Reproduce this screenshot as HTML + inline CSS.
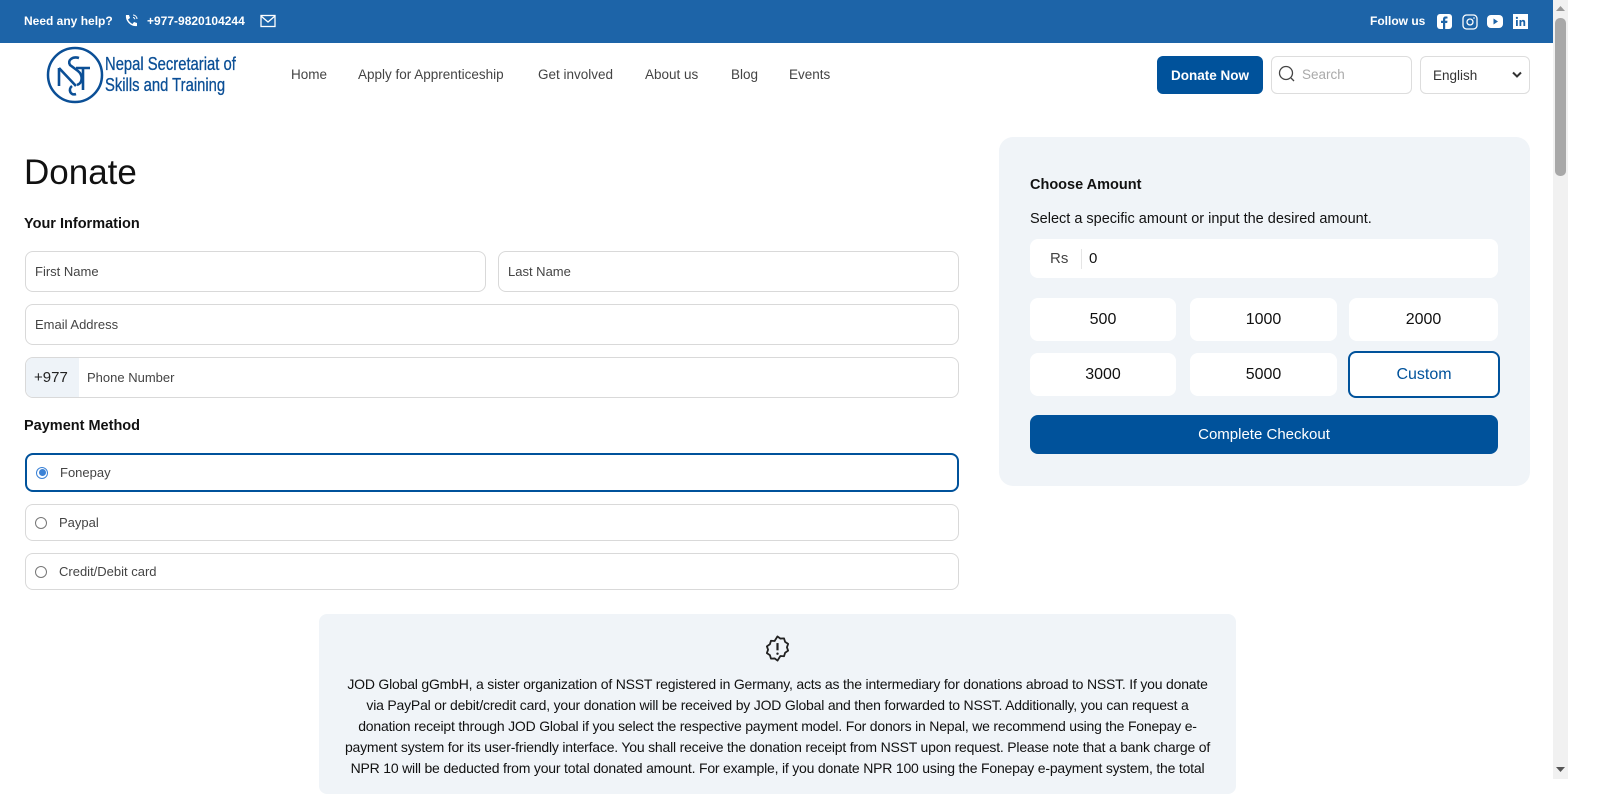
<!DOCTYPE html>
<html><head><meta charset="utf-8"><style>
*{box-sizing:border-box;margin:0;padding:0}
body{width:1600px;height:779px;overflow:hidden;background:#fff;font-family:"Liberation Sans",Arial,sans-serif;position:relative;color:#111}
.abs{position:absolute}
.top{left:0;top:0;width:1553px;height:43px;background:#1d64a8;color:#fff;font-size:12px;font-weight:bold}
.nav a{position:absolute;top:67px;font-size:13.5px;color:#444;text-decoration:none}
.inp{position:absolute;border:1px solid #d9d9d9;border-radius:8px;background:#fff;font-size:13px;color:#444;padding-left:9px;display:flex;align-items:center}
.radio{width:12px;height:12px;border:1px solid #777;border-radius:50%;margin-right:12px;margin-left:0}
.amt{position:absolute;background:#fff;border-radius:8px;width:148px;height:43px;display:flex;align-items:center;justify-content:center;font-size:16px;color:#111}
</style></head><body>
<div class="abs top">
 <span class="abs" style="left:24px;top:14px">Need any help?</span>
 <svg class="abs" style="left:123px;top:13px" width="16" height="16" viewBox="0 0 16 16"><path d="M3 2l3 0 1 3-2 1.5c1 2 2.5 3.5 4.5 4.5L11 9l3 1v3c-6 1-12-5-11-11z" fill="#fff"/><path d="M10 2a4 4 0 0 1 4 4M10 4.5a1.8 1.8 0 0 1 1.8 1.8" stroke="#fff" fill="none" stroke-width="1"/></svg>
 <span class="abs" style="left:147px;top:14px">+977-9820104244</span>
 <svg class="abs" style="left:260px;top:14px" width="16" height="14" viewBox="0 0 16 14"><rect x="1" y="1.5" width="14" height="11" fill="none" stroke="#fff" stroke-width="1.3"/><path d="M1 2l7 6 7-6" fill="none" stroke="#fff" stroke-width="1.3"/></svg>
 <span class="abs" style="left:1370px;top:14px">Follow us</span>
 <svg class="abs" style="left:1437px;top:14px" width="15" height="15" viewBox="0 0 15 15"><rect width="15" height="15" rx="3" fill="#fff"/><path d="M8.2 15V9h2l.3-2.2H8.2V5.5c0-.6.2-1 1-1h1.3V2.6c-.3 0-1-.1-1.8-.1-1.8 0-2.7 1-2.7 2.8v1.5H4V9h2v6z" fill="#1d64a8"/></svg>
 <svg class="abs" style="left:1462px;top:14px" width="16" height="16" viewBox="0 0 16 16"><rect x="1" y="1" width="14" height="14" rx="3.5" fill="none" stroke="#fff" stroke-width="1.3"/><circle cx="8" cy="8" r="3" fill="none" stroke="#fff" stroke-width="1.3"/><circle cx="12" cy="4" r=".8" fill="#fff"/></svg>
 <svg class="abs" style="left:1487px;top:15px" width="16" height="13" viewBox="0 0 16 13"><rect width="16" height="13" rx="4" fill="#fff"/><path d="M6.5 3.5v6l4.5-3z" fill="#1d64a8"/></svg>
 <svg class="abs" style="left:1513px;top:14px" width="15" height="15" viewBox="0 0 15 15"><rect width="15" height="15" fill="#fff"/><rect x="3" y="6" width="1.8" height="6" fill="#1d64a8"/><circle cx="3.9" cy="3.9" r="1.1" fill="#1d64a8"/><path d="M6.5 6h1.7v1c.5-.8 1.2-1.1 2-1.1 1.5 0 2 .9 2 2.5V12h-1.8V8.8c0-.8-.2-1.3-.9-1.3s-1.2.5-1.2 1.3V12H6.5z" fill="#1d64a8"/></svg>
</div>
<svg class="abs" style="left:45px;top:46px" width="60" height="58" viewBox="0 0 60 58"><circle cx="30" cy="29" r="27" fill="none" stroke="#0b4f96" stroke-width="2.5"/><path d="M34 12c-6-2-12 2-9 7l8 6c5 4 5 12-1 14" fill="none" stroke="#0b4f96" stroke-width="2.6"/><path d="M14 22v18M14 22l17 18M31 22h14M38 22v22" fill="none" stroke="#0b4f96" stroke-width="2.6"/><path d="M27 40c-4 3-2 10 4 8" fill="none" stroke="#0b4f96" stroke-width="2.6"/></svg>
<div class="abs" style="left:105px;top:53px;font-size:18.5px;line-height:21px;color:#0b4f96;transform:scaleX(.8);transform-origin:0 0;white-space:nowrap;-webkit-text-stroke:.3px #0b4f96">Nepal Secretariat of<br>Skills and Training</div>
<div class="nav"><a style="left:291px">Home</a><a style="left:358px">Apply for Apprenticeship</a><a style="left:538px">Get involved</a><a style="left:645px">About us</a><a style="left:731px">Blog</a><a style="left:789px">Events</a></div>
<div class="abs" style="left:1157px;top:56px;width:106px;height:38px;background:#00529b;border-radius:6px;color:#fff;font-size:13.5px;font-weight:bold;display:flex;align-items:center;justify-content:center">Donate Now</div>
<div class="abs" style="left:1271px;top:56px;width:141px;height:38px;border:1px solid #ddd;border-radius:6px;font-size:13.5px;color:#aaa;padding:10px 0 0 30px">Search</div>
<svg class="abs" style="left:1278px;top:65px" width="18" height="19" viewBox="0 0 18 19"><circle cx="8" cy="8" r="6.5" fill="none" stroke="#444" stroke-width="1.3"/><path d="M13 13l3 3" stroke="#444" stroke-width="1.3"/></svg>
<div class="abs" style="left:1420px;top:56px;width:110px;height:38px;border:1px solid #ddd;border-radius:6px;font-size:13.5px;color:#333;padding:11px 0 0 12px">English</div>
<svg class="abs" style="left:1512px;top:71px" width="10" height="8" viewBox="0 0 10 8"><path d="M1 1.5l4 4 4-4" fill="none" stroke="#333" stroke-width="2"/></svg>

<div class="abs" style="left:24px;top:153px;font-size:35px;color:#111">Donate</div>
<div class="abs" style="left:24px;top:216px;font-size:14.5px;font-weight:bold">Your Information</div>
<div class="inp" style="left:25px;top:251px;width:461px;height:41px">First Name</div>
<div class="inp" style="left:498px;top:251px;width:461px;height:41px">Last Name</div>
<div class="inp" style="left:25px;top:304px;width:934px;height:41px">Email Address</div>
<div class="inp" style="left:25px;top:357px;width:934px;height:41px;padding-left:0;overflow:hidden"><span style="background:#eef3f8;height:100%;width:53px;display:flex;align-items:center;padding-left:8px;font-size:15px;color:#222">+977</span><span style="padding-left:8px">Phone Number</span></div>
<div class="abs" style="left:24px;top:418px;font-size:14.5px;font-weight:bold">Payment Method</div>
<div class="inp" style="left:25px;top:453px;width:934px;height:39px;border:2px solid #00529b"><span class="radio" style="border-color:#3b82d6;display:flex;align-items:center;justify-content:center"><span style="width:7px;height:7px;border-radius:50%;background:#3b82d6"></span></span><span>Fonepay</span></div>
<div class="inp" style="left:25px;top:504px;width:934px;height:37px"><span class="radio"></span>Paypal</div>
<div class="inp" style="left:25px;top:553px;width:934px;height:37px"><span class="radio"></span>Credit/Debit card</div>

<div class="abs" style="left:999px;top:137px;width:531px;height:349px;background:#f0f4f8;border-radius:14px"></div>
<div class="abs" style="left:1030px;top:177px;font-size:14.5px;font-weight:bold">Choose Amount</div>
<div class="abs" style="left:1030px;top:211px;font-size:14.5px">Select a specific amount or input the desired amount.</div>
<div class="abs" style="left:1030px;top:239px;width:468px;height:39px;background:#fff;border-radius:8px;font-size:15px;display:flex;align-items:center"><span style="padding-left:20px;color:#444;width:52px;border-right:1px solid #e5e5e5;line-height:20px">Rs</span><span style="padding-left:7px">0</span></div>
<div class="amt" style="left:1030px;top:298px;width:146px">500</div>
<div class="amt" style="left:1190px;top:298px;width:147px">1000</div>
<div class="amt" style="left:1349px;top:298px;width:149px">2000</div>
<div class="amt" style="left:1030px;top:353px;width:146px">3000</div>
<div class="amt" style="left:1190px;top:353px;width:147px">5000</div>
<div class="amt" style="left:1348px;top:351px;width:152px;height:47px;border:2px solid #00529b;color:#00529b">Custom</div>
<div class="abs" style="left:1030px;top:415px;width:468px;height:39px;background:#00529b;border-radius:8px;color:#fff;font-size:15px;display:flex;align-items:center;justify-content:center">Complete Checkout</div>

<div class="abs" style="left:319px;top:614px;width:917px;height:180px;background:#f0f4f8;border-radius:8px"></div>
<svg class="abs" style="left:763px;top:634px" width="29" height="29" viewBox="0 0 24 24"><path d="M12 2l2.4 1.8 3-.2.9 2.9 2.5 1.7-1 2.8 1 2.8-2.5 1.7-.9 2.9-3-.2L12 22l-2.4-1.8-3 .2-.9-2.9-2.5-1.7 1-2.8-1-2.8 2.5-1.7.9-2.9 3 .2z" fill="none" stroke="#222" stroke-width="1.5" stroke-linejoin="round"/><path d="M12 7.5v6" stroke="#222" stroke-width="1.8"/><circle cx="12" cy="16.3" r="1" fill="#222"/></svg>
<div class="abs" style="left:330px;top:674px;width:895px;text-align:center;font-size:14px;line-height:21px;color:#111;letter-spacing:-0.2px;white-space:nowrap">JOD Global gGmbH, a sister organization of NSST registered in Germany, acts as the intermediary for donations abroad to NSST. If you donate<br>via PayPal or debit/credit card, your donation will be received by JOD Global and then forwarded to NSST. Additionally, you can request a<br>donation receipt through JOD Global if you select the respective payment model. For donors in Nepal, we recommend using the Fonepay e-<br>payment system for its user-friendly interface. You shall receive the donation receipt from NSST upon request. Please note that a bank charge of<br>NPR 10 will be deducted from your total donated amount. For example, if you donate NPR 100 using the Fonepay e-payment system, the total</div>

<div class="abs" style="left:1553px;top:0;width:15px;height:779px;background:#f1f1f1"></div>
<div class="abs" style="left:1555px;top:18px;width:11px;height:158px;background:#a8a8a8;border-radius:5px"></div>
<svg class="abs" style="left:1555px;top:4px" width="11" height="8"><path d="M1 7l4.5-5 4.5 5z" fill="#999"/></svg>
<svg class="abs" style="left:1555px;top:766px" width="11" height="8"><path d="M1 1l4.5 5 4.5-5z" fill="#555"/></svg>
</body></html>
